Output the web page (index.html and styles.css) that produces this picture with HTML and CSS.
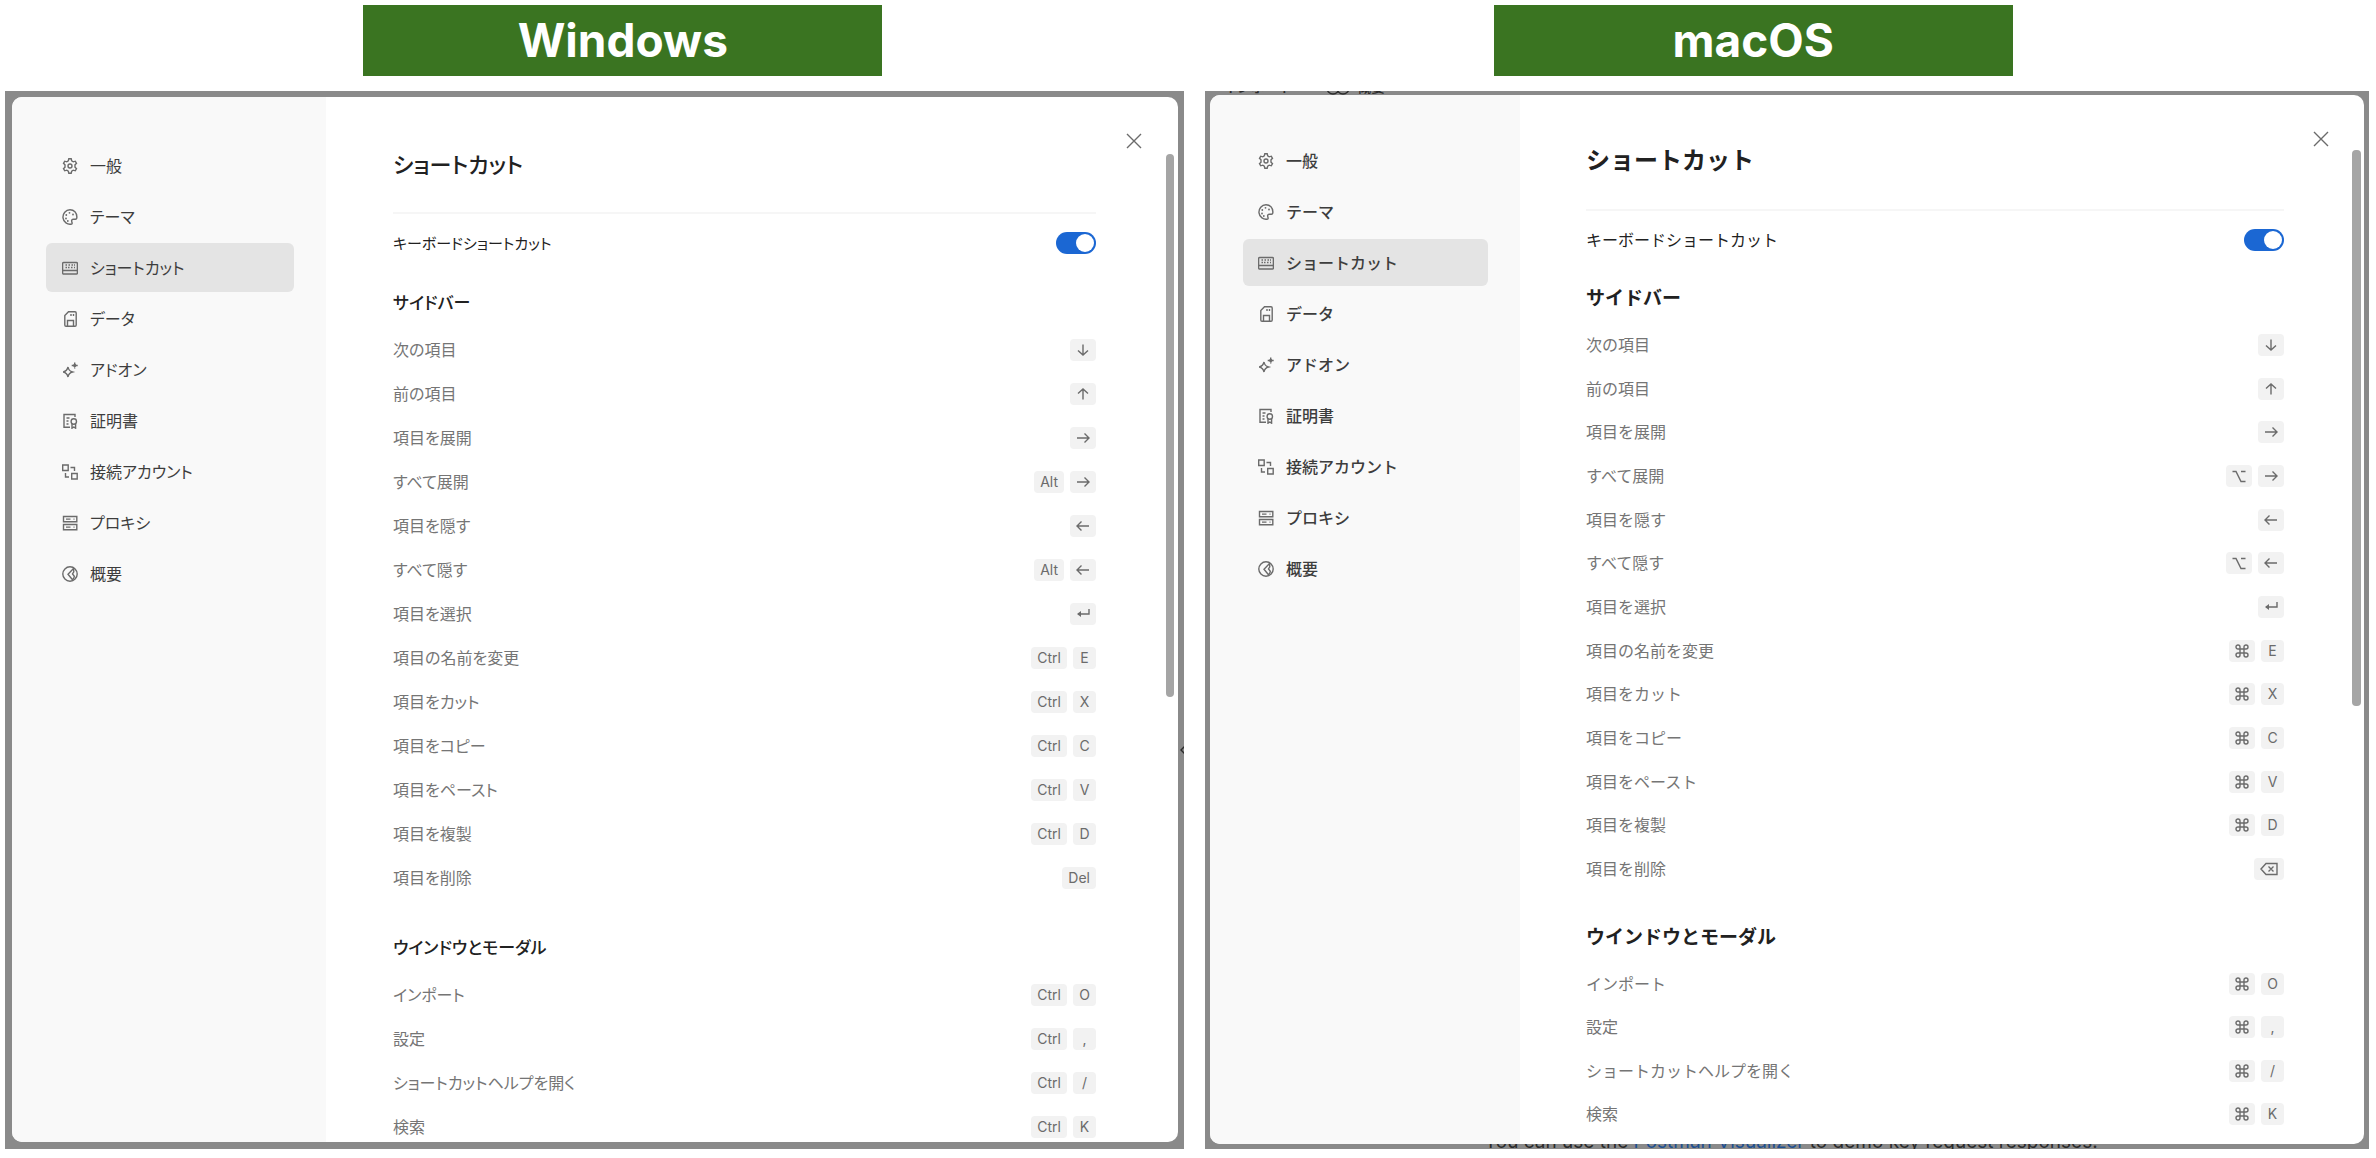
FILE: index.html
```html
<!DOCTYPE html>
<html lang="ja">
<head>
<meta charset="utf-8">
<meta name="viewport" content="width=device-width, initial-scale=1">
<title>ショートカット</title>
<link rel="stylesheet" href="styles.css">
</head>
<body>
<svg class="sprite" aria-hidden="true">
  <symbol id="i-gear" viewBox="0 0 16 16"><path d="M6.800.8h2.400l.5 2.100 1.500.9 2.100-.6 1.200 2.100-1.500 1.500v2.400l1.500 1.500-1.200 2.100-2.100-.6-1.500.9-.5 2.100H6.800l-.5-2.100-1.500-.9-2.100.6-1.200-2.100L3 9.200V6.800L1.500 5.300l1.200-2.100 2.100.6 1.500-.9z"/><circle cx="8" cy="8" r="2"/></symbol>
  <symbol id="i-palette" viewBox="0 0 16 16"><path d="M8 .8a7 7.200 0 1 0 1.600 14.200c.9-.3.500-1.300.2-2.200-.5-1.500.2-2.600 1.700-2.600h1.800c1 0 1.600-.8 1.600-2.200C14.900 3.800 12 .8 8 .8z"/><g class="dots"><circle cx="4" cy="9.500" r=".9"/><circle cx="4.300" cy="6" r=".9"/><circle cx="7.500" cy="3.800" r=".9"/><circle cx="11" cy="5.500" r=".9"/><circle cx="5.800" cy="12" r=".9"/></g></symbol>
  <symbol id="i-keyboard" viewBox="0 0 16 16"><rect x=".6" y="2.500" width="14.800" height="11.500" rx="1"/><path d="M1 10.500h14M3.500 5h1.500M6.500 5H8M9.500 5H11M12 5h1M3.500 7.500h1.500M6 7.500h1.500M9 7.500h1.500M12 7.500h1"/></symbol>
  <symbol id="i-disk" viewBox="0 0 16 16"><path d="M6.500.8H13c.8 0 1.200.4 1.200 1.200v12c0 .8-.4 1.200-1.200 1.200H4c-.8 0-1.200-.4-1.200-1.200V4.500zM5.500 15V9.500h6V15M9 3v2M11.500 3v2"/></symbol>
  <symbol id="i-spark" viewBox="0 0 16 16"><path d="M6 5c.5 3 1.500 4.200 4.500 5-3 .8-4 2-4.500 5-.6-3-1.600-4.200-4.800-5C4.400 9.200 5.400 8 6 5z"/><path d="M12.700.500v6M9.700 3.500h6M12.700 2l1.300 1.500-1.300 1.500-1.300-1.500z"/></symbol>
  <symbol id="i-cert" viewBox="0 0 16 16"><path d="M13 4V1.500H2v12.700h6M4.500 5h3M4.500 8h2M4.500 11h2"/><circle cx="11.800" cy="8.500" r="2.700"/><path d="M10 10.800v4.400l1.800-1.200 1.800 1.200v-4.400"/></symbol>
  <symbol id="i-link" viewBox="0 0 16 16"><path d="M.7 1h5.500v5.500H.7zM9.700 9.500h5.500V15H9.700zM8.500 3.500h4V7M3.500 9v4H7"/></symbol>
  <symbol id="i-server" viewBox="0 0 16 16"><path d="M1.500 1.500h13.300v5.300H1.500zM1.500 9.500h13.300v5.300H1.500zM4 4.100h4.500M11.500 4.100h1M4 12.100h4.500M11.500 12.100h1"/></symbol>
  <symbol id="i-pen" viewBox="0 0 16 16"><circle cx="8" cy="8" r="7.200"/><path d="M11.500 2.500 6 8.200l4.500 5.500c1.300-1 1.800-2.500 1.800-3.500L10.500 8l1.300-2.200z"/></symbol>
  <symbol id="i-close" viewBox="0 0 16 16"><path d="m1 1 14 14M15 1 1 15"/></symbol>
  <symbol id="i-down" viewBox="0 0 14 14"><path d="M7 1.500v10.500M2 7.500l5 4.500 5-4.500"/></symbol>
  <symbol id="i-up" viewBox="0 0 14 14"><path d="M7 12.500V2M2 6.500 7 2l5 4.500"/></symbol>
  <symbol id="i-right" viewBox="0 0 14 14"><path d="M1 7h11.500M8.500 2.500 13 7l-4.500 4.500"/></symbol>
  <symbol id="i-left" viewBox="0 0 14 14"><path d="M13 7H1.500M5.500 2.500 1 7l4.500 4.500"/></symbol>
  <symbol id="i-enter" viewBox="0 0 14 14"><path d="M13 2v5H2"/><path class="solid" d="M5 4v6L1 7z"/></symbol>
  <symbol id="i-option" viewBox="0 0 14 14"><path d="M.5 2.500h3.500l5 10h4.500M9 2.500h4.500"/></symbol>
  <symbol id="i-command" viewBox="0 0 14 14"><path d="M5 5h4v4H5zM5 5H3a2 2 0 1 1 2-2zM9 5V3a2 2 0 1 1 2 2zM9 9h2a2 2 0 1 1-2 2zM5 9v2a2 2 0 1 1-2-2z"/></symbol>
  <symbol id="i-erase" viewBox="0 0 18 14"><path d="M6 1.500h11v11H6L1 7zM8.500 4.500l5 5M13.500 4.500l-5 5"/></symbol>
</svg>

<main class="board">
  <section class="side side-win">
    <h1 class="banner">Windows</h1>
    <div class="frame">
      <div class="behind" aria-hidden="true">
        <svg class="chevron" viewBox="0 0 8 12"><path d="M7 1 2 6l5 5"/></svg>
      </div>
      <div class="dialog">
        <nav class="menu">
          <a href="#"><svg><use href="#i-gear"/></svg>一般</a>
          <a href="#"><svg><use href="#i-palette"/></svg>テーマ</a>
          <a href="#" class="current"><svg><use href="#i-keyboard"/></svg>ショートカット</a>
          <a href="#"><svg><use href="#i-disk"/></svg>データ</a>
          <a href="#"><svg><use href="#i-spark"/></svg>アドオン</a>
          <a href="#"><svg><use href="#i-cert"/></svg>証明書</a>
          <a href="#"><svg><use href="#i-link"/></svg>接続アカウント</a>
          <a href="#"><svg><use href="#i-server"/></svg>プロキシ</a>
          <a href="#"><svg><use href="#i-pen"/></svg>概要</a>
        </nav>
        <div class="content">
          <h2 class="title">ショートカット</h2>
          <div class="setting">
            <label for="kb-win">キーボードショートカット</label>
            <input class="toggle" type="checkbox" id="kb-win" checked>
          </div>
          <h3>サイドバー</h3>
          <table class="keys long">
            <tr><th>次の項目</th><td><kbd><svg><use href="#i-down"/></svg></kbd></td></tr>
            <tr><th>前の項目</th><td><kbd><svg><use href="#i-up"/></svg></kbd></td></tr>
            <tr><th>項目を展開</th><td><kbd><svg><use href="#i-right"/></svg></kbd></td></tr>
            <tr><th>すべて展開</th><td><kbd>Alt</kbd><kbd><svg><use href="#i-right"/></svg></kbd></td></tr>
            <tr><th>項目を隠す</th><td><kbd><svg><use href="#i-left"/></svg></kbd></td></tr>
            <tr><th>すべて隠す</th><td><kbd>Alt</kbd><kbd><svg><use href="#i-left"/></svg></kbd></td></tr>
            <tr><th>項目を選択</th><td><kbd><svg><use href="#i-enter"/></svg></kbd></td></tr>
            <tr><th>項目の名前を変更</th><td><kbd>Ctrl</kbd><kbd>E</kbd></td></tr>
            <tr><th>項目をカット</th><td><kbd>Ctrl</kbd><kbd>X</kbd></td></tr>
            <tr><th>項目をコピー</th><td><kbd>Ctrl</kbd><kbd>C</kbd></td></tr>
            <tr><th>項目をペースト</th><td><kbd>Ctrl</kbd><kbd>V</kbd></td></tr>
            <tr><th>項目を複製</th><td><kbd>Ctrl</kbd><kbd>D</kbd></td></tr>
            <tr><th>項目を削除</th><td><kbd>Del</kbd></td></tr>
          </table>
          <h3>ウインドウとモーダル</h3>
          <table class="keys short">
            <tr><th>インポート</th><td><kbd>Ctrl</kbd><kbd>O</kbd></td></tr>
            <tr><th>設定</th><td><kbd>Ctrl</kbd><kbd>,</kbd></td></tr>
            <tr><th>ショートカットヘルプを開く</th><td><kbd>Ctrl</kbd><kbd>/</kbd></td></tr>
            <tr><th>検索</th><td><kbd>Ctrl</kbd><kbd>K</kbd></td></tr>
          </table>
        </div>
        <button class="close" type="button" aria-label="閉じる"><svg><use href="#i-close"/></svg></button>
        <span class="thumb"></span>
      </div>
    </div>
  </section>

  <section class="side side-mac">
    <h1 class="banner">macOS</h1>
    <div class="frame">
      <div class="behind" aria-hidden="true">
        <span class="tab tab-import">インポート</span>
        <svg class="tab-icon" viewBox="0 0 24 16"><circle cx="7" cy="8" r="6"/><circle cx="17" cy="8" r="6"/></svg>
        <span class="tab tab-about">概要</span>
        <p class="note">You can use the <a href="#">Postman Visualizer</a> to demo key request responses.</p>
      </div>
      <div class="dialog">
        <nav class="menu">
          <a href="#"><svg><use href="#i-gear"/></svg>一般</a>
          <a href="#"><svg><use href="#i-palette"/></svg>テーマ</a>
          <a href="#" class="current"><svg><use href="#i-keyboard"/></svg>ショートカット</a>
          <a href="#"><svg><use href="#i-disk"/></svg>データ</a>
          <a href="#"><svg><use href="#i-spark"/></svg>アドオン</a>
          <a href="#"><svg><use href="#i-cert"/></svg>証明書</a>
          <a href="#"><svg><use href="#i-link"/></svg>接続アカウント</a>
          <a href="#"><svg><use href="#i-server"/></svg>プロキシ</a>
          <a href="#"><svg><use href="#i-pen"/></svg>概要</a>
        </nav>
        <div class="content">
          <h2 class="title">ショートカット</h2>
          <div class="setting">
            <label for="kb-mac">キーボードショートカット</label>
            <input class="toggle" type="checkbox" id="kb-mac" checked>
          </div>
          <h3>サイドバー</h3>
          <table class="keys long">
            <tr><th>次の項目</th><td><kbd><svg><use href="#i-down"/></svg></kbd></td></tr>
            <tr><th>前の項目</th><td><kbd><svg><use href="#i-up"/></svg></kbd></td></tr>
            <tr><th>項目を展開</th><td><kbd><svg><use href="#i-right"/></svg></kbd></td></tr>
            <tr><th>すべて展開</th><td><kbd><svg><use href="#i-option"/></svg></kbd><kbd><svg><use href="#i-right"/></svg></kbd></td></tr>
            <tr><th>項目を隠す</th><td><kbd><svg><use href="#i-left"/></svg></kbd></td></tr>
            <tr><th>すべて隠す</th><td><kbd><svg><use href="#i-option"/></svg></kbd><kbd><svg><use href="#i-left"/></svg></kbd></td></tr>
            <tr><th>項目を選択</th><td><kbd><svg><use href="#i-enter"/></svg></kbd></td></tr>
            <tr><th>項目の名前を変更</th><td><kbd><svg><use href="#i-command"/></svg></kbd><kbd>E</kbd></td></tr>
            <tr><th>項目をカット</th><td><kbd><svg><use href="#i-command"/></svg></kbd><kbd>X</kbd></td></tr>
            <tr><th>項目をコピー</th><td><kbd><svg><use href="#i-command"/></svg></kbd><kbd>C</kbd></td></tr>
            <tr><th>項目をペースト</th><td><kbd><svg><use href="#i-command"/></svg></kbd><kbd>V</kbd></td></tr>
            <tr><th>項目を複製</th><td><kbd><svg><use href="#i-command"/></svg></kbd><kbd>D</kbd></td></tr>
            <tr><th>項目を削除</th><td><kbd><svg class="wide"><use href="#i-erase"/></svg></kbd></td></tr>
          </table>
          <h3>ウインドウとモーダル</h3>
          <table class="keys short">
            <tr><th>インポート</th><td><kbd><svg><use href="#i-command"/></svg></kbd><kbd>O</kbd></td></tr>
            <tr><th>設定</th><td><kbd><svg><use href="#i-command"/></svg></kbd><kbd>,</kbd></td></tr>
            <tr><th>ショートカットヘルプを開く</th><td><kbd><svg><use href="#i-command"/></svg></kbd><kbd>/</kbd></td></tr>
            <tr><th>検索</th><td><kbd><svg><use href="#i-command"/></svg></kbd><kbd>K</kbd></td></tr>
          </table>
        </div>
        <button class="close" type="button" aria-label="閉じる"><svg><use href="#i-close"/></svg></button>
        <span class="thumb"></span>
      </div>
    </div>
  </section>
</main>
</body>
</html>
```
FILE: styles.css
```css
* { box-sizing: border-box; }

body {
  margin: 0;
  background: #fff;
  color: #212121;
  font-family: Inter, "Noto Sans CJK JP", sans-serif;
  font-size: 16px;
}

.sprite { display: none; }
svg { fill: none; stroke: currentColor; stroke-width: 1.4; }
.dots, .solid { fill: currentColor; stroke: none; }

.board {
  display: grid;
  grid-template-columns: 1179fr 1164fr;
  gap: 21px;
  height: 100vh;
  padding: 5px 7px 9px 5px;
}

.side {
  display: flex;
  flex-direction: column;
  gap: 15px;
  min-width: 0;
  min-height: 0;
}

.banner {
  width: 44%;
  margin: 0 0 0 30.4%;
  background: #3a7421;
  color: #fff;
  font-size: 46px;
  font-weight: 700;
  line-height: 71px;
  text-align: center;
}

.frame {
  position: relative;
  flex: 1;
  display: flex;
  min-height: 0;
  padding: 6px 6px 7px 7px;
  background: #8a8a8a;
}

.behind {
  position: absolute;
  inset: 0;
  overflow: hidden;
  color: #2b2b2b;
}
.chevron {
  position: absolute;
  top: 653px;
  right: -3px;
  width: 8px;
  height: 12px;
}

.dialog {
  position: relative;
  flex: 1;
  display: grid;
  grid-template-columns: 314px 1fr;
  min-width: 0;
  border-radius: 10px;
  background: #fff;
  overflow: hidden;
}

/* Settings menu */
.menu {
  display: grid;
  grid-auto-rows: 49px;
  gap: 2px;
  align-content: start;
  min-height: 0;
  padding: 44px 32px 0 34px;
  background: #f9f9f9;
}
.menu a {
  display: flex;
  align-items: center;
  gap: 12px;
  padding: 0 16px;
  border-radius: 6px;
  color: #3d3d3d;
  line-height: 24px;
  text-decoration: none;
}
.menu a svg { width: 16px; height: 16px; color: #6b6b6b; }
.menu .current { background: #e4e4e4; }

/* Settings body */
.content {
  min-height: 0;
  padding: 43px 82px 0 67px;
}
.title {
  margin: 0;
  padding-bottom: 22px;
  border-bottom: 2px solid #f6f6f6;
  font-size: 22px;
  font-weight: 500;
  line-height: 50px;
}
.setting {
  display: flex;
  align-items: center;
  justify-content: space-between;
  height: 58px;
  margin-bottom: 6px;
}
.setting label { padding-bottom: 2px; }
.side-win .setting label { font-size: 15px; }
.toggle {
  appearance: none;
  display: flex;
  justify-content: flex-end;
  width: 40px;
  height: 22px;
  margin: 0;
  padding: 2px;
  border-radius: 11px;
  background: #1b67d3;
}
.toggle::before {
  content: "";
  width: 18px;
  height: 18px;
  border-radius: 50%;
  background: #fff;
}

h3 {
  margin: 0;
  font-size: 17px;
  font-weight: 500;
  line-height: 50px;
}
.keys + h3 { margin-top: 23px; }

.keys {
  width: 100%;
  border-collapse: collapse;
  color: #757575;
}
.keys tr { height: 44px; }
.keys th {
  padding: 0 0 2px;
  font-weight: 400;
  text-align: left;
}
.keys td {
  padding: 0;
  text-align: right;
  font-size: 0;
}
kbd {
  display: inline-flex;
  align-items: center;
  justify-content: center;
  min-width: 23px;
  height: 22px;
  margin-left: 6px;
  padding: 0 6px;
  border-radius: 4px;
  background: #f2f2f2;
  color: #6b6b6b;
  font-family: Inter, sans-serif;
  font-size: 14px;
  line-height: 22px;
  vertical-align: middle;
}
kbd svg { width: 14px; height: 14px; }
kbd .wide { width: 18px; }

.close {
  position: absolute;
  top: 32px;
  right: 32px;
  display: grid;
  place-items: center;
  width: 24px;
  height: 24px;
  padding: 0;
  border: 0;
  background: none;
  color: #6b6b6b;
}
.close svg { width: 16px; height: 16px; }

.thumb {
  position: absolute;
  top: 57px;
  right: 4px;
  width: 8px;
  height: 52%;
  border-radius: 4px;
  background: #a5a5a5;
}

/* Windows sets its kana proportionally */
.side-win .dialog { font-feature-settings: "palt"; }

/* macOS variations */
.side-mac .banner { margin-left: 24.8%; width: 44.6%; }
.side-mac .frame { padding: 4px 5px 5px; }
.side-mac .dialog { grid-template-columns: 310px 1fr; }
.side-mac .menu {
  grid-auto-rows: 47px;
  gap: 4px;
  padding: 42px 32px 0 33px;
}
.side-mac .menu a { font-weight: 500; padding: 0 15px; }
.side-mac .content { padding: 41px 80px 0 66px; }
.side-mac .title { padding-bottom: 23px; font-size: 24px; font-weight: 700; }
.side-mac .setting { margin-bottom: 6px; }
.side-mac h3 { font-size: 19px; font-weight: 700; line-height: 48px; }
.side-mac .keys + h3 { margin-top: 23px; }
.side-mac .keys tr { height: 43px; }
.side-mac .keys.long { height: 568px; }
.side-mac .keys.short { height: 174px; }
.side-mac .close { right: 31px; }
.side-mac .thumb { top: 55px; right: 3px; width: 9px; height: 53%; }

.tab {
  position: absolute;
  top: -14px;
  font-size: 14px;
  font-weight: 500;
  line-height: 20px;
}
.tab-import { left: 18px; }
.tab-about { left: 152px; }
.tab-icon { position: absolute; left: 121px; top: -11px; width: 24px; height: 16px; }
.note {
  position: absolute;
  left: 24%;
  bottom: -5px;
  margin: 0;
  font-size: 19px;
  line-height: 24px;
  white-space: nowrap;
}
.note a { color: #1d4f91; text-decoration: none; }
```
